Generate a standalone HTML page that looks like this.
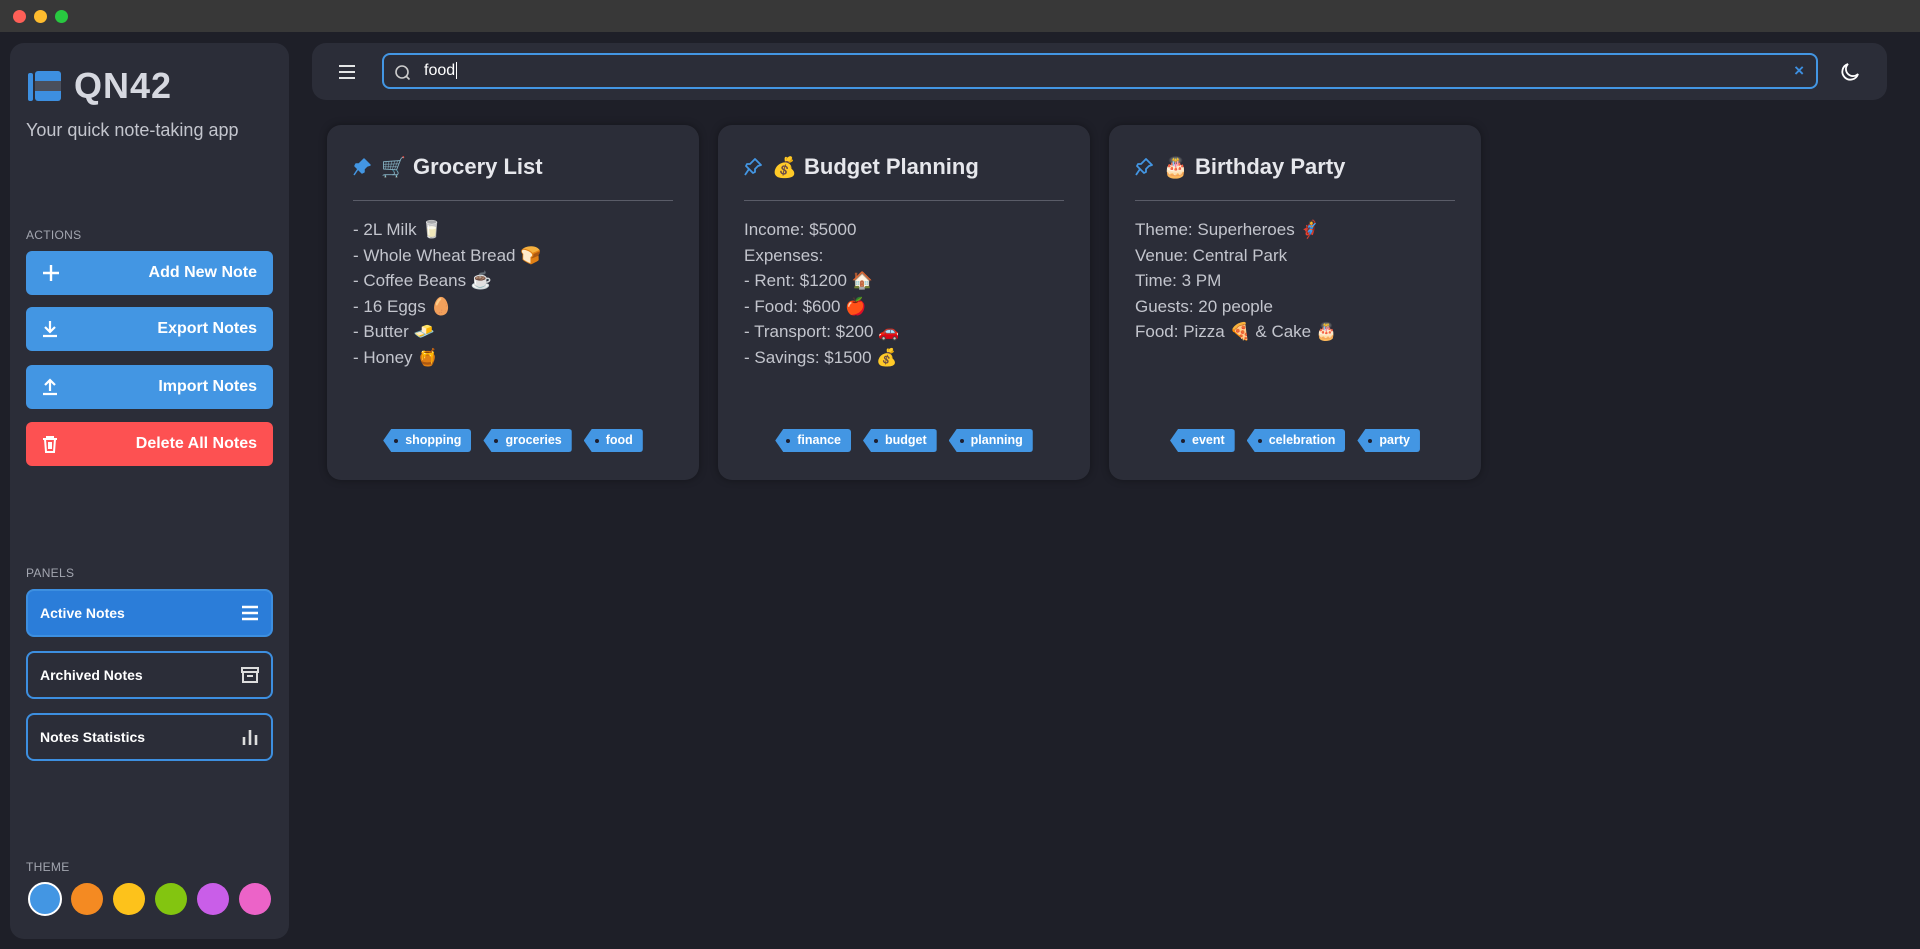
<!DOCTYPE html>
<html><head><meta charset="utf-8"><style>
*{box-sizing:border-box;margin:0;padding:0}
body{width:1920px;height:949px;background:#1e1f28;font-family:"Liberation Sans",sans-serif;color:#c9cbd3;overflow:hidden;position:relative}
.titlebar{position:absolute;left:0;top:0;width:1920px;height:32px;background:#383838}
.dot{position:absolute;top:10px;width:13px;height:13px;border-radius:50%}
.side{position:absolute;left:10px;top:43px;width:279px;height:896px;background:#2b2d38;border-radius:14px}
.logo{position:absolute;left:16px;top:22px;display:flex;align-items:center;gap:10px}
.logo b{font-size:36px;color:#d6d8e0;font-weight:bold;letter-spacing:1px}
.sub{position:absolute;left:16px;top:77px;font-size:18px;color:#c3c5cd}
.lbl{position:absolute;left:16px;font-size:12px;color:#a3a6b0;letter-spacing:.3px}
.btn{position:absolute;left:16px;width:247px;height:44px;border-radius:6px;background:#4396e3;color:#fff;font-weight:bold;font-size:16px;display:flex;align-items:center;justify-content:space-between;padding:0 16px 0 16px}
.pnl{position:absolute;left:16px;width:247px;height:48px;border-radius:8px;border:2px solid #3d8fe0;color:#fff;font-weight:bold;font-size:14px;display:flex;align-items:center;justify-content:space-between;padding:0 12px 0 12px}
.circ{position:absolute;top:840px;width:32px;height:32px;border-radius:50%}
.top{position:absolute;left:312px;top:43px;width:1575px;height:57px;background:#2b2d38;border-radius:14px}
.search{position:absolute;left:70px;top:10px;width:1436px;height:36px;border:2px solid #4396e3;border-radius:8px;background:#2b2d38}
.card{position:absolute;top:125px;width:372px;height:355px;background:#2b2d38;border-radius:14px;box-shadow:0 0 8px rgba(0,0,0,.35)}
.ct{position:absolute;left:26px;top:29px;display:flex;align-items:center;font-size:22px;font-weight:bold;color:#e6e7ec}
.ct .pin{width:28px;display:flex;align-items:center}
.ct .em{width:32px;font-size:20px}
.hr{position:absolute;left:26px;right:26px;top:75px;height:1px;background:#5a5c68}
.body{position:absolute;left:26px;top:92px;font-size:17px;line-height:25.5px;color:#c3c5cd}
.tags{position:absolute;left:0;right:0;top:304px;display:flex;justify-content:center;gap:12px}
.tag{height:23px;background:#4396e3;color:#fff;font-size:12.5px;font-weight:bold;padding:0 10px 0 22px;line-height:23px;clip-path:polygon(8px 0,100% 0,100% 100%,8px 100%,0 50%);border-radius:0 3px 3px 0;position:relative}
.tag:before{content:"";position:absolute;left:11px;top:10px;width:4px;height:4px;border-radius:50%;background:#1e2030}
</style></head><body>
<div class="titlebar">
<div class="dot" style="left:13px;background:#fe5f57"></div>
<div class="dot" style="left:34px;background:#febc2e"></div>
<div class="dot" style="left:55px;background:#28c840"></div>
</div>
<div class="side">
<div class="logo"><svg width="38" height="38" viewBox="0 0 38 38"><rect x="2" y="6" width="5" height="28" rx="2" fill="#3d8fe0"/><rect x="9" y="4" width="26" height="30" rx="3" fill="#3d8fe0"/><rect x="9" y="14" width="26" height="10" fill="#4a4f5c"/></svg><b>QN42</b></div>
<div class="sub">Your quick note-taking app</div>
<div class="lbl" style="top:185px">ACTIONS</div>
<div class="btn" style="top:208px"><svg width="18" height="18" viewBox="0 0 18 18"><path d="M9 1v16M1 9h16" stroke="#fff" stroke-width="2.4"/></svg><span>Add New Note</span></div>
<div class="btn" style="top:264px"><svg width="16" height="18" viewBox="0 0 16 18"><path d="M8 1v11M3 7l5 5 5-5M1 16h14" stroke="#fff" stroke-width="2.2" fill="none"/></svg><span>Export Notes</span></div>
<div class="btn" style="top:322px"><svg width="16" height="18" viewBox="0 0 16 18"><path d="M8 13V2M3 7l5-5 5 5M1 16h14" stroke="#fff" stroke-width="2.2" fill="none"/></svg><span>Import Notes</span></div>
<div class="btn" style="top:379px;background:#fd5152"><svg width="16" height="18" viewBox="0 0 16 18"><path d="M1 4h14M5 4V2h6v2M3 4l1 13h8l1-13M7 7v7M9 7v7" stroke="#fff" stroke-width="2" fill="none"/></svg><span>Delete All Notes</span></div>
<div class="lbl" style="top:523px">PANELS</div>
<div class="pnl" style="top:546px;background:#2b7dd9"><span>Active Notes</span><svg width="18" height="16" viewBox="0 0 18 16"><path d="M1 2h16M1 8h16M1 14h16" stroke="#fff" stroke-width="2.4"/></svg></div>
<div class="pnl" style="top:608px"><span>Archived Notes</span><svg width="18" height="16" viewBox="0 0 18 16"><path d="M1 1h16v4H1zM2 5v10h14V5M6 9h6" stroke="#ddd" stroke-width="2" fill="none"/></svg></div>
<div class="pnl" style="top:670px"><span>Notes Statistics</span><svg width="18" height="18" viewBox="0 0 18 18"><path d="M3 17V9M9 17V2M15 17V7" stroke="#ddd" stroke-width="2.6"/></svg></div>
<div class="lbl" style="top:817px">THEME</div>
<div class="circ" style="left:18px;background:#4396e3;border:2px solid #fff;width:34px;height:34px;top:839px"></div>
<div class="circ" style="left:61px;background:#f48a22"></div>
<div class="circ" style="left:103px;background:#fdc21b"></div>
<div class="circ" style="left:145px;background:#83c510"></div>
<div class="circ" style="left:187px;background:#c95ee8"></div>
<div class="circ" style="left:229px;background:#ec63c8"></div>
</div>
<div class="top">
<svg style="position:absolute;left:27px;top:22px" width="16" height="14" viewBox="0 0 16 14"><path d="M0 1h16M0 7h16M0 13h16" stroke="#fff" stroke-width="1.8"/></svg>
<div class="search">
<svg style="position:absolute;left:10px;top:9px" width="18" height="18" viewBox="0 0 18 18"><circle cx="8" cy="8" r="6" stroke="#ccc" stroke-width="1.6" fill="none"/><path d="M12.5 12.5l3 3" stroke="#ccc" stroke-width="1.6"/></svg>
<span style="position:absolute;left:40px;top:7px;font-size:16px;color:#fff">food<span style="border-left:1px solid #fff;margin-left:1px"></span></span>
<span style="position:absolute;right:12px;top:6px;font-size:17px;color:#3d8fe0;font-weight:bold">×</span>
</div>
<svg style="position:absolute;left:1528px;top:19px" width="20" height="20" viewBox="0 0 20 20"><path d="M8 2a8 8 0 1 0 10 10A6.5 6.5 0 0 1 8 2z" stroke="#fff" stroke-width="1.8" fill="none"/></svg>
</div>

<div class="card" style="left:327px">
<div class="ct"><span class="pin"><svg width="18" height="18" viewBox="0 0 18 18"><path d="M11 1l6 6-3 1-3 3 0 3-2 1-7-7 1-2 3 0 3-3z M5 11l-4 6" fill="#4396e3" stroke="#4396e3" stroke-width="1.5" stroke-linejoin="round"/></svg></span><span class="em">🛒</span>Grocery List</div>
<div class="hr"></div>
<div class="body">- 2L Milk 🥛<br>- Whole Wheat Bread 🍞<br>- Coffee Beans ☕<br>- 16 Eggs 🥚<br>- Butter 🧈<br>- Honey 🍯</div>
<div class="tags"><span class="tag">shopping</span><span class="tag">groceries</span><span class="tag">food</span></div>
</div>
<div class="card" style="left:718px">
<div class="ct"><span class="pin"><svg width="18" height="18" viewBox="0 0 18 18"><path d="M11 1l6 6-3 1-3 3 0 3-2 1-7-7 1-2 3 0 3-3z M5 11l-4 6" fill="none" stroke="#4396e3" stroke-width="1.8" stroke-linejoin="round"/></svg></span><span class="em">💰</span>Budget Planning</div>
<div class="hr"></div>
<div class="body">Income: $5000<br>Expenses:<br>- Rent: $1200 🏠<br>- Food: $600 🍎<br>- Transport: $200 🚗<br>- Savings: $1500 💰</div>
<div class="tags"><span class="tag">finance</span><span class="tag">budget</span><span class="tag">planning</span></div>
</div>
<div class="card" style="left:1109px">
<div class="ct"><span class="pin"><svg width="18" height="18" viewBox="0 0 18 18"><path d="M11 1l6 6-3 1-3 3 0 3-2 1-7-7 1-2 3 0 3-3z M5 11l-4 6" fill="none" stroke="#4396e3" stroke-width="1.8" stroke-linejoin="round"/></svg></span><span class="em">🎂</span>Birthday Party</div>
<div class="hr"></div>
<div class="body">Theme: Superheroes 🦸<br>Venue: Central Park<br>Time: 3 PM<br>Guests: 20 people<br>Food: Pizza 🍕 &amp; Cake 🎂</div>
<div class="tags"><span class="tag">event</span><span class="tag">celebration</span><span class="tag">party</span></div>
</div>
</body></html>
